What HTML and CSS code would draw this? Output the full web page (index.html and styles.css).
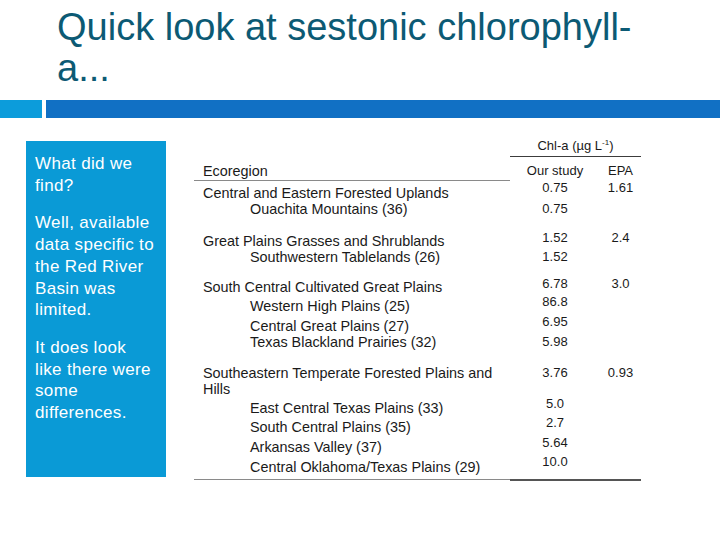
FILE: index.html
```html
<!DOCTYPE html>
<html lang="en">
<head>
<meta charset="utf-8">
<title>Quick look at sestonic chlorophyll-a</title>
<link rel="stylesheet" href="styles.css">
</head>
<body>
<div class="slide">
  <h1 class="title">Quick look at sestonic chlorophyll-<br>a...</h1>
  <div class="bars"><div class="sq"></div><div class="bar"></div></div>
  <div class="content">
    <aside class="side">
      <p>What did we<br>find?</p>
      <p>Well, available<br>data specific to<br>the Red River<br>Basin was<br>limited.</p>
      <p>It does look<br>like there were<br>some<br>differences.</p>
    </aside>
    <div class="tbl">
      <div class="row hdr1"><div class="c2 chl">Chl-a (µg L<sup>-1</sup>)</div></div>
      <div class="row hdr2"><div class="c1 eco">Ecoregion</div><div class="c2">Our study</div><div class="c3">EPA</div></div>

      <div class="row grp first"><div class="c1">Central and Eastern Forested Uplands</div><div class="c2 hi5">0.75</div><div class="c3 hi5">1.61</div></div>
      <div class="row"><div class="c1 sub">Ouachita Mountains (36)</div><div class="c2">0.75</div><div class="c3"></div></div>

      <div class="row grp"><div class="c1">Great Plains Grasses and Shrublands</div><div class="c2 hi3">1.52</div><div class="c3 hi3">2.4</div></div>
      <div class="row"><div class="c1 sub">Southwestern Tablelands (26)</div><div class="c2">1.52</div><div class="c3"></div></div>

      <div class="row grp g3"><div class="c1">South Central Cultivated Great Plains</div><div class="c2 hi3">6.78</div><div class="c3 hi3">3.0</div></div>
      <div class="row sp3"><div class="c1 sub">Western High Plains (25)</div><div class="c2 hi4">86.8</div><div class="c3"></div></div>
      <div class="row sp4"><div class="c1 sub">Central Great Plains (27)</div><div class="c2 hi4">6.95</div><div class="c3"></div></div>
      <div class="row"><div class="c1 sub">Texas Blackland Prairies (32)</div><div class="c2">5.98</div><div class="c3"></div></div>

      <div class="row grp g4"><div class="c1">Southeastern Temperate Forested Plains and<br>Hills</div><div class="c2">3.76</div><div class="c3">0.93</div></div>
      <div class="row sp3"><div class="c1 sub">East Central Texas Plains (33)</div><div class="c2 hi4">5.0</div><div class="c3"></div></div>
      <div class="row sp3"><div class="c1 sub">South Central Plains (35)</div><div class="c2 hi4">2.7</div><div class="c3"></div></div>
      <div class="row sp4"><div class="c1 sub">Arkansas Valley (37)</div><div class="c2 hi4">5.64</div><div class="c3"></div></div>
      <div class="row sp4"><div class="c1 sub">Central Oklahoma/Texas Plains (29)</div><div class="c2 hi5">10.0</div><div class="c3"></div></div>

      <div class="row foot"><div class="c1 fl"></div><div class="fr"></div></div>
    </div>
  </div>
</div>
</body>
</html>
```

FILE: styles.css
```css
* { box-sizing: border-box; }
html, body { margin: 0; padding: 0; background: #ffffff; }
.slide {
  width: 720px;
  height: 540px;
  overflow: hidden;
  font-family: "Liberation Sans", Arial, sans-serif;
  background: #ffffff;
}
.title {
  margin: 7px 0 0 57px;
  font-size: 38px;
  line-height: 41px;
  font-weight: normal;
  color: #0c5a74;
}
.bars {
  display: flex;
  gap: 4px;
  margin-top: 11px;
  height: 18px;
}
.sq { width: 42px; background: #0c9cdb; }
.bar { flex: 1; background: #1170c4; }

.content {
  display: flex;
  align-items: flex-start;
}
.side {
  margin: 23px 0 0 26px;
  width: 140px;
  height: 336px;
  background: #0a9ad6;
  color: #ffffff;
  padding: 12px 0 0 9px;
  font-size: 17px;
  line-height: 21.7px;
  letter-spacing: 0.35px;
}
.side p { margin: 0 0 16px 0; }

.tbl {
  margin: 17px 0 0 28px;
  width: 447px;
  font-size: 13px;
  color: #1a1a1a;
}
.row {
  display: grid;
  grid-template-columns: 316px 90px 41px;
  line-height: 16px;
}
.c2, .c3 { text-align: center; }
.c1 { padding-left: 9px; font-size: 14.4px; }
.c1.sub { padding-left: 56px; }
.hdr1 { height: 22px; }
.hdr1 .chl {
  grid-column: 2 / 4;
  line-height: 21px;
  border-bottom: 1px solid #3c3c3c;
}
.chl sup { font-size: 8px; vertical-align: 5px; line-height: 0; }
.hdr2 { height: 24px; padding-top: 6px; }
.hdr2 .eco { border-bottom: 1px solid #8a8a8a; height: 18px; line-height: 16px; }
.grp { margin-top: 16px; }
.grp.first { margin-top: 4px; }
.grp.g3 { margin-top: 14px; }
.grp.g4 { margin-top: 15px; }
.sp3 { margin-top: 3px; }
.sp4 { margin-top: 4px; }
.hi3 { transform: translateY(-3px); }
.hi4 { transform: translateY(-4px); }
.hi5 { transform: translateY(-5px); }
.foot { margin-top: 4px; }
.foot .fl { border-top: 1px solid #8a8a8a; }
.foot .fr { grid-column: 2 / 4; border-top: 2px solid #555555; }
```
